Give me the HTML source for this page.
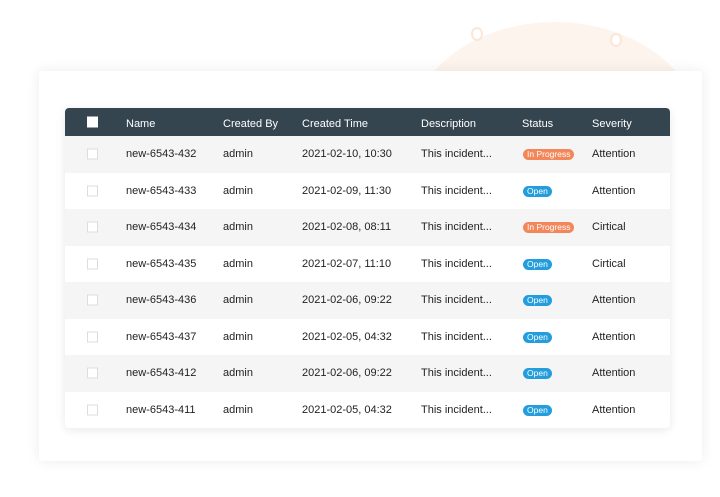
<!DOCTYPE html>
<html><head><style>
body{margin:0;width:720px;height:497px;background:#fff;position:relative;overflow:hidden;font-family:"Liberation Sans",sans-serif;}
.blob{position:absolute;left:410px;top:22px;width:290px;height:220px;border-radius:50%;background:#fdf4ee;}
.dot{position:absolute;width:8px;height:10px;border-radius:50%;background:#fff;border:2px solid #fbe6d8;}
.card{position:absolute;left:39px;top:71px;width:663px;height:390px;background:#fff;box-shadow:0 0 14px rgba(0,0,0,0.08);border-radius:3px;}
.tbl{position:absolute;left:65px;top:108px;width:605px;height:320px;background:#fff;border-radius:4px;box-shadow:0 2px 10px rgba(0,0,0,0.09);overflow:hidden;}
.hd{height:28px;background:#344550;color:#fff;font-size:11px;position:relative;}
.hd .c{top:56%;}
.row{height:36.5px;position:relative;font-size:11px;color:#222;}
.row:nth-child(odd){background:#f5f5f5;}
.c{position:absolute;top:50%;transform:translateY(-50%);white-space:nowrap;}
.cb{position:absolute;left:22px;top:50%;transform:translateY(-50%);width:9px;height:9px;border:1px solid #ddd;background:#fff;}
.hcb{left:22px;width:11px;height:11px;border:none;background:#fff;}
.b{font-size:8.5px;color:#fff;border-radius:6px;padding:0 4px;line-height:11px;display:inline-block;}
.ip{background:#f4875a;}.op{background:#239ddc;}
</style></head><body>
<div class="blob"></div>
<div class="dot" style="left:471px;top:27px"></div>
<div class="dot" style="left:610px;top:33px"></div>
<div class="card"></div>
<div class="tbl">
<div class="hd"><div class="cb hcb"></div>
<span class="c" style="left:61px">Name</span><span class="c" style="left:158px">Created By</span><span class="c" style="left:237px">Created Time</span><span class="c" style="left:356px">Description</span><span class="c" style="left:457px">Status</span><span class="c" style="left:527px">Severity</span></div>
<div>
<div class="row"><div class="cb"></div><span class="c" style="left:61px">new-6543-432</span><span class="c" style="left:158px">admin</span><span class="c" style="left:237px">2021-02-10, 10:30</span><span class="c" style="left:356px">This incident...</span><span class="c" style="left:458px"><span class="b ip">In Progress</span></span><span class="c" style="left:527px">Attention</span></div>
<div class="row"><div class="cb"></div><span class="c" style="left:61px">new-6543-433</span><span class="c" style="left:158px">admin</span><span class="c" style="left:237px">2021-02-09, 11:30</span><span class="c" style="left:356px">This incident...</span><span class="c" style="left:458px"><span class="b op">Open</span></span><span class="c" style="left:527px">Attention</span></div>
<div class="row"><div class="cb"></div><span class="c" style="left:61px">new-6543-434</span><span class="c" style="left:158px">admin</span><span class="c" style="left:237px">2021-02-08, 08:11</span><span class="c" style="left:356px">This incident...</span><span class="c" style="left:458px"><span class="b ip">In Progress</span></span><span class="c" style="left:527px">Cirtical</span></div>
<div class="row"><div class="cb"></div><span class="c" style="left:61px">new-6543-435</span><span class="c" style="left:158px">admin</span><span class="c" style="left:237px">2021-02-07, 11:10</span><span class="c" style="left:356px">This incident...</span><span class="c" style="left:458px"><span class="b op">Open</span></span><span class="c" style="left:527px">Cirtical</span></div>
<div class="row"><div class="cb"></div><span class="c" style="left:61px">new-6543-436</span><span class="c" style="left:158px">admin</span><span class="c" style="left:237px">2021-02-06, 09:22</span><span class="c" style="left:356px">This incident...</span><span class="c" style="left:458px"><span class="b op">Open</span></span><span class="c" style="left:527px">Attention</span></div>
<div class="row"><div class="cb"></div><span class="c" style="left:61px">new-6543-437</span><span class="c" style="left:158px">admin</span><span class="c" style="left:237px">2021-02-05, 04:32</span><span class="c" style="left:356px">This incident...</span><span class="c" style="left:458px"><span class="b op">Open</span></span><span class="c" style="left:527px">Attention</span></div>
<div class="row"><div class="cb"></div><span class="c" style="left:61px">new-6543-412</span><span class="c" style="left:158px">admin</span><span class="c" style="left:237px">2021-02-06, 09:22</span><span class="c" style="left:356px">This incident...</span><span class="c" style="left:458px"><span class="b op">Open</span></span><span class="c" style="left:527px">Attention</span></div>
<div class="row"><div class="cb"></div><span class="c" style="left:61px">new-6543-411</span><span class="c" style="left:158px">admin</span><span class="c" style="left:237px">2021-02-05, 04:32</span><span class="c" style="left:356px">This incident...</span><span class="c" style="left:458px"><span class="b op">Open</span></span><span class="c" style="left:527px">Attention</span></div>
</div>
</div>
</body></html>
